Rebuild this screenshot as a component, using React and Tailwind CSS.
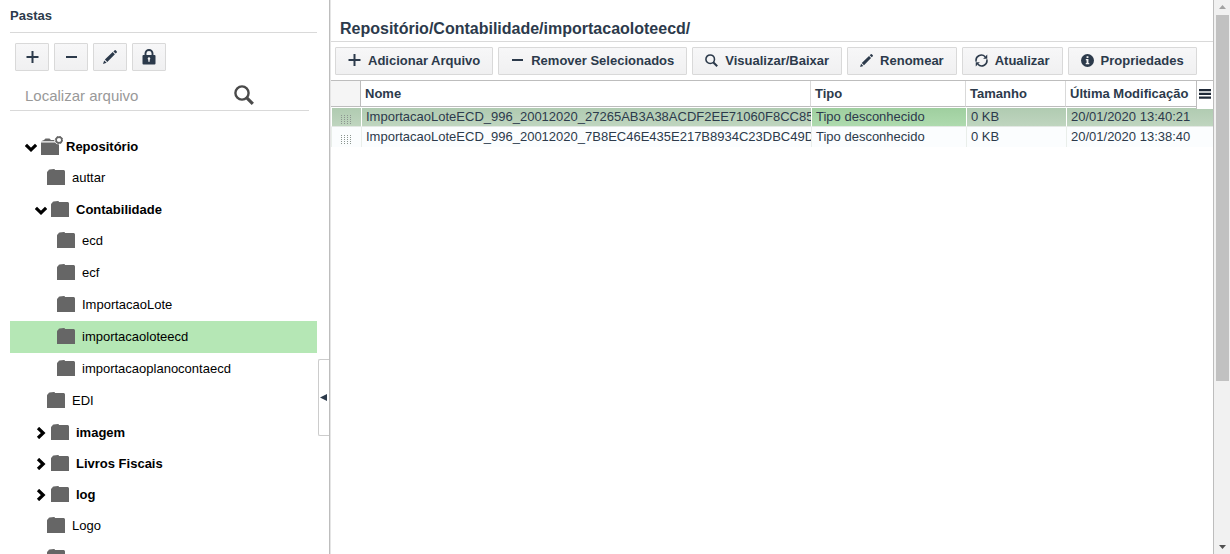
import { useState } from 'react';

const TREE = [
  {
    name: 'Repositório',
    root: true,
    open: true,
    children: [
      { name: 'auttar' },
      {
        name: 'Contabilidade',
        open: true,
        children: [
          { name: 'ecd' },
          { name: 'ecf' },
          { name: 'ImportacaoLote' },
          { name: 'importacaoloteecd' },
          { name: 'importacaoplanocontaecd' },
        ],
      },
      { name: 'EDI' },
      { name: 'imagem', children: [] },
      { name: 'Livros Fiscais', children: [] },
      { name: 'log', children: [] },
      { name: 'Logo' },
      { name: '' },
    ],
  },
];

const FILES = [
  { name: 'ImportacaoLoteECD_996_20012020_27265AB3A38ACDF2EE71060F8CC85', type: 'Tipo desconhecido', size: '0 KB', date: '20/01/2020 13:40:21' },
  { name: 'ImportacaoLoteECD_996_20012020_7B8EC46E435E217B8934C23DBC49D', type: 'Tipo desconhecido', size: '0 KB', date: '20/01/2020 13:38:40' },
];

const LEAF_INDENT = ['pl-[31px]', 'pl-[37px]', 'pl-[47px]'];
const BRANCH_INDENT = ['pl-[15px]', 'pl-[25px]', 'pl-[35px]'];

function PlusIcon({ className }) {
  return (
    <svg viewBox="0 0 13 13" className={className} fill="currentColor" aria-hidden>
      <path d="M5.500 0h2v5H12.500v2H7.500v5h-2V7h-5V5h5z" />
    </svg>
  );
}

function MinusIcon({ className }) {
  return (
    <svg viewBox="0 0 13 13" className={className} fill="currentColor" aria-hidden>
      <path d="M1 5h11v2H1z" />
    </svg>
  );
}

function PencilIcon({ className }) {
  return (
    <svg viewBox="0 0 14 14" className={className} fill="currentColor" aria-hidden>
      <path d="M0 14l1.200-3.600 2.400 2.400zM1.900 9.600L9.700 2.100l2.200 2.200-7.600 7.800zM10.400 1.400L11.700.2q.5-.4 1 .1l1.100 1.100q.4.500 0 1L12.600 3.600z" />
    </svg>
  );
}

function LockIcon({ className }) {
  return (
    <svg viewBox="0 0 14 16" className={className} aria-hidden>
      <path d="M3.500 7V4.300a3.500 3.300 0 0 1 7 0V7" fill="none" stroke="currentColor" strokeWidth="1.900" />
      <rect x="0.500" y="6" width="13" height="9.500" rx="1" fill="currentColor" />
      <path d="M7 8.300a1.300 1.300 0 0 1 .7 2.400v2H6.300v-2A1.300 1.300 0 0 1 7 8.300z" fill="#f3f3f4" />
    </svg>
  );
}

function SearchIcon({ className }) {
  return (
    <svg viewBox="0 0 20 20" className={className} fill="none" stroke="currentColor" aria-hidden>
      <circle cx="8" cy="8" r="6.600" strokeWidth="2.400" />
      <path d="M12.600 12.600l6.200 6.200" strokeWidth="3.200" />
    </svg>
  );
}

function RefreshIcon({ className }) {
  return (
    <svg viewBox="0 0 14 14" className={className} aria-hidden>
      <g fill="none" stroke="currentColor" strokeWidth="1.700">
        <path d="M1.300 8.200A5.700 5.700 0 0 1 10.900 2.900" />
        <path d="M12.700 5.800A5.700 5.700 0 0 1 3.100 11.100" />
      </g>
      <path d="M13.200.6v4.400H8.800zM.8 13.400V9h4.400z" fill="currentColor" />
    </svg>
  );
}

function InfoIcon({ className }) {
  return (
    <svg viewBox="0 0 14 14" className={className} aria-hidden>
      <circle cx="7" cy="7" r="7" fill="currentColor" />
      <path d="M6 2.500h2v1.800H6zM5.200 5.400H8v4.300h.9V11H5.100V9.700H6V6.600h-.8z" fill="#f3f3f4" />
    </svg>
  );
}

function FolderIcon() {
  return (
    <svg width="18" height="16" viewBox="0 0 18 16" className="shrink-0" aria-hidden>
      <path d="M0 3.500Q0 2 1.200 2 1.200.5 2.500.5L7 0q1 0 1 1h8.700Q18 1 18 2.500V16H0z" fill="#666" />
    </svg>
  );
}

function RootFolderIcon() {
  return (
    <svg width="22" height="19" viewBox="0 0 22 19" className="-mr-1 shrink-0" aria-hidden>
      <path d="M0 6.500h14q1.200 2 4 2V19H0zM0 5.300l3-1.300 1.500-1.500h4L10 4h3.200l.4 1.300z" fill="#666" />
      <circle cx="18" cy="4" r="2.900" fill="#fff" stroke="#666" strokeWidth="1.600" />
      <circle cx="18" cy="4" r="3.700" fill="none" stroke="#666" strokeWidth="1" strokeDasharray="1.400 1.500" />
    </svg>
  );
}

function Chevron({ open }) {
  return (
    <svg width="12" height="12" viewBox="0 0 12 12" className="shrink-0" fill="none" stroke="#000" strokeWidth="3.200" aria-hidden>
      <path d={open ? 'M.9 3.800L6 8.800l5.100-5' : 'M3 1l5.200 5L3 11'} />
    </svg>
  );
}

function TreeNode({ node, level, selected, onSelect }) {
  const [open, setOpen] = useState(!!node.open);
  const branch = !!node.children;
  const active = selected === node.name;

  return (
    <li>
      <button
        onClick={() => {
          onSelect(node.name);
          if (branch) setOpen(!open);
        }}
        className={`flex w-full items-center text-left text-[13px] text-black ${
          branch ? `h-[31px] gap-1 font-bold ${BRANCH_INDENT[level]}` : `h-8 gap-[7px] ${LEAF_INDENT[level]}`
        } ${active ? 'bg-[#b5e7b5]' : ''}`}
      >
        {branch && <Chevron open={open} />}
        <span className="pb-0.5">{node.root ? <RootFolderIcon /> : <FolderIcon />}</span>
        <span className={branch ? 'pl-[3px]' : ''}>{node.name}</span>
      </button>
      {branch && open && (
        <ul>
          {node.children.map(child => (
            <TreeNode key={child.name} node={child} level={level + 1} selected={selected} onSelect={onSelect} />
          ))}
        </ul>
      )}
    </li>
  );
}

function IconButton({ label, children }) {
  return (
    <button
      aria-label={label}
      className="flex h-7 w-[34px] items-center justify-center rounded-[1px] border border-[#d9d9d9] bg-linear-to-b from-[#f7f7f8] to-[#f0f0f1]"
    >
      {children}
    </button>
  );
}

function ToolButton({ icon: Icon, children }) {
  return (
    <button className="flex h-7 shrink-0 items-center gap-[7px] rounded-[1px] border border-[#d9d9d9] bg-linear-to-b from-[#f7f7f8] to-[#f0f0f1] px-3 text-[13px] font-bold whitespace-nowrap">
      <span className="pb-0.5"><Icon className="size-[13px]" /></span>
      {children}
    </button>
  );
}

function Sidebar() {
  const [selected, setSelected] = useState('importacaoloteecd');

  return (
    <aside className="relative w-[330px] shrink-0 overflow-hidden border-r border-[#bdbdbd] pr-3 pl-[10px]">
      <h2 className="h-[33px] border-b border-[#d9d9d9] text-[13px] leading-8 font-bold">Pastas</h2>
      <div className="flex gap-[5px] px-[5px] pt-[10px]">
        <IconButton label="Adicionar pasta"><PlusIcon className="size-[13px]" /></IconButton>
        <IconButton label="Remover pasta"><MinusIcon className="size-[13px]" /></IconButton>
        <IconButton label="Renomear pasta"><PencilIcon className="size-[14px]" /></IconButton>
        <IconButton label="Permissões"><LockIcon className="h-4 w-[14px]" /></IconButton>
      </div>
      <div className="mt-2 mr-2 flex h-8 items-center border-b border-[#d9d9d9] pl-[15px]">
        <input
          type="text"
          aria-label="Localizar arquivo"
          placeholder="Localizar arquivo"
          className="w-[209px] bg-transparent pt-1 text-[15px] placeholder:text-[#999] focus:outline-none"
        />
        <button aria-label="Pesquisar" className="text-[#4a4a4a]">
          <SearchIcon className="size-5" />
        </button>
      </div>
      <ul className="mt-5">
        {TREE.map(node => (
          <TreeNode key={node.name} node={node} level={0} selected={selected} onSelect={setSelected} />
        ))}
      </ul>
      <button
        aria-label="Recolher painel"
        className="absolute top-[359px] right-0 flex h-[77px] w-[11px] items-center justify-start rounded-l-xs border border-r-0 border-[#ccc] bg-white pl-px"
      >
        <svg width="7" height="7" viewBox="0 0 7 7" fill="#2c3a4b" aria-hidden><path d="M0 3.500L7 0v7z" /></svg>
      </button>
    </aside>
  );
}

function Grip() {
  return (
    <svg width="11" height="9" viewBox="0 0 11 9" className="mx-auto mt-1" fill="#8b958f" aria-hidden>
      {[0, 3, 6, 9].map(x => [0, 2, 4, 6, 8].map(y => <rect key={`${x}-${y}`} x={x} y={y} width="1" height="1" />))}
    </svg>
  );
}

function FileTable() {
  return (
    <div className="relative border-t border-[#bdbdbd]">
      <table className="w-full table-fixed border-separate border-spacing-0 text-left text-[13px]">
        <colgroup>
          <col className="w-[30px]" />
          <col />
          <col className="w-[155px]" />
          <col className="w-[100px]" />
          <col className="w-[147px]" />
        </colgroup>
        <thead>
          <tr className="h-[26px] leading-4">
            <th className="border-r border-b border-[#bdbdbd] bg-[#f5f5f5] p-0"><span className="sr-only">Mover</span></th>
            <th className="border-r border-b border-r-[#d9d9d9] border-b-[#bdbdbd] px-1 py-0">Nome</th>
            <th className="border-r border-b border-r-[#d9d9d9] border-b-[#bdbdbd] px-1 py-0">Tipo</th>
            <th className="border-r border-b border-r-[#d9d9d9] border-b-[#bdbdbd] px-1 py-0">Tamanho</th>
            <th className="border-b border-[#bdbdbd] px-1 py-0 whitespace-nowrap">Última Modificação</th>
          </tr>
        </thead>
        <tbody>
          {FILES.map((file, i) => {
            const edge = i === 0
              ? 'border-t border-b border-l border-t-white border-b-[#e3e8e4] border-l-white'
              : 'border-l border-[#e9eeea]';
            const tone = i === 0 ? 'bg-linear-to-b from-[#b0cbb1] to-[#bfd5bf]' : 'bg-[#fbfdfe]';
            const tipoTone = i === 0 ? 'bg-linear-to-b from-[#9fcf9f] to-[#aedaae]' : 'bg-[#fbfdfe]';
            const cell = `overflow-hidden p-0 pl-1 whitespace-nowrap ${edge}`;
            return (
              <tr key={file.date} className="h-5 leading-[18px]">
                <td className={`p-0 ${edge} ${tone}`}><Grip /></td>
                <td className={`${cell} ${tone}`}>{file.name}</td>
                <td className={`${cell} ${tipoTone}`}>{file.type}</td>
                <td className={`${cell} ${tone}`}>{file.size}</td>
                <td className={`${cell} ${tone}`}>{file.date}</td>
              </tr>
            );
          })}
        </tbody>
      </table>
      <button
        aria-label="Colunas"
        className="absolute top-0 right-0 flex h-7 w-[17px] items-center justify-center border-l border-[#bdbdbd] bg-white pb-0.5"
      >
        <svg width="12" height="10" viewBox="0 0 12 10" fill="#1f2937" aria-hidden>
          <path d="M0 0h12v2.300H0zM0 3.700h12V6H0zM0 7.400h12v2.300H0z" />
        </svg>
      </button>
    </div>
  );
}

function ScrollBar() {
  return (
    <div className="flex w-4 shrink-0 flex-col items-center bg-[#f1f1f1] py-[5px]" aria-hidden>
      <svg width="7" height="4" viewBox="0 0 7 4" fill="#a3a3a3"><path d="M0 4L3.500 0 7 4z" /></svg>
      <div className="mt-1.5 flex w-full flex-1 flex-col pr-px pl-0.5">
        <div className="h-[69%] w-full bg-[#c1c1c1]" />
      </div>
      <svg width="7" height="4" viewBox="0 0 7 4" fill="#505050"><path d="M0 0h7L3.500 4z" /></svg>
    </div>
  );
}

export default function App() {
  return (
    <div className="flex h-screen overflow-hidden bg-white font-['Liberation_Sans',Arial,sans-serif] text-[#2c3a4b]">
      <Sidebar />
      <main className="min-w-0 flex-1 overflow-hidden border-r border-l border-r-[#bdbdbd] border-l-[#e5e5e5]">
        <h1 className="border-b border-[#d9d9d9] pt-4 pl-[9px] text-base leading-[25px] font-bold">
          Repositório/Contabilidade/importacaoloteecd/
        </h1>
        <div className="flex gap-[5px] px-1 py-[5px]">
          <ToolButton icon={PlusIcon}>Adicionar Arquivo</ToolButton>
          <ToolButton icon={MinusIcon}>Remover Selecionados</ToolButton>
          <ToolButton icon={SearchIcon}>Visualizar/Baixar</ToolButton>
          <ToolButton icon={PencilIcon}>Renomear</ToolButton>
          <ToolButton icon={RefreshIcon}>Atualizar</ToolButton>
          <ToolButton icon={InfoIcon}>Propriedades</ToolButton>
        </div>
        <FileTable />
      </main>
      <ScrollBar />
    </div>
  );
}
